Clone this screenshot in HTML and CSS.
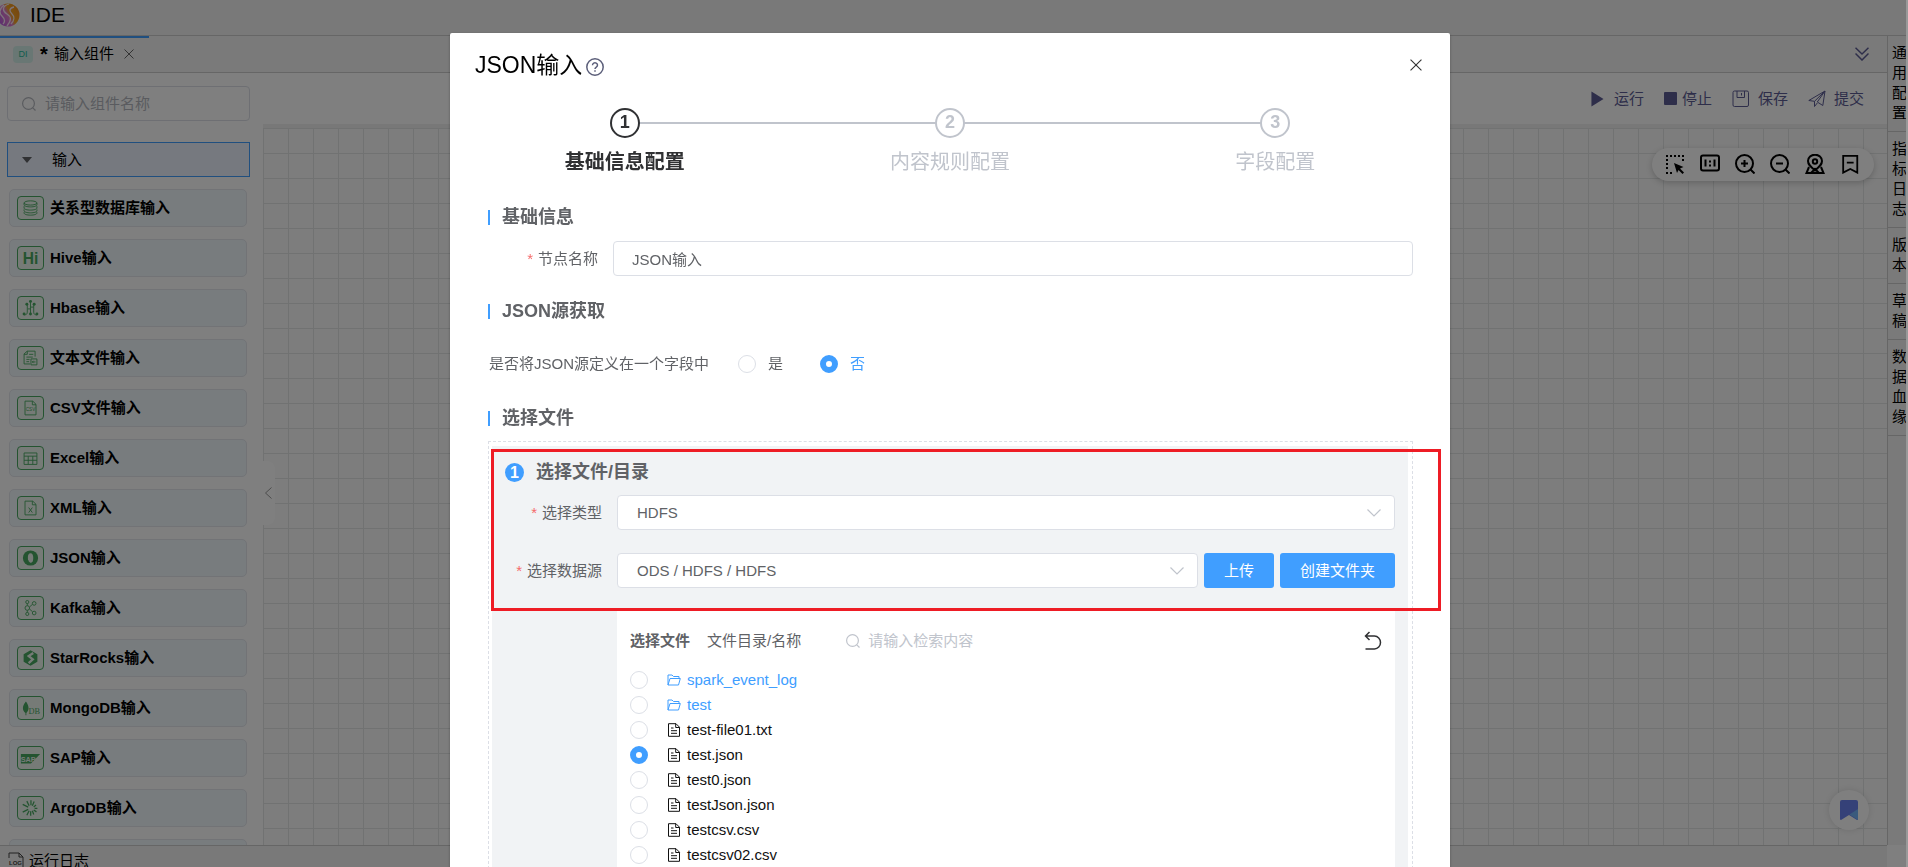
FILE: index.html
```html
<!doctype html>
<html lang="zh-CN">
<head>
    <meta charset="utf-8">
    <meta name="viewport" content="width=device-width, initial-scale=1">
    <title>IDE</title>
    <link rel="stylesheet" href="styles.css">
</head>
<body>
    <div class="app">
        <header class="header">
            <svg class="logo" viewBox="0 0 24 24">
                <defs>
                    <linearGradient id="logoFill" x1="0" y1="0.7" x2="1" y2="0.2">
                        <stop offset="0" stop-color="#b45be0"/>
                        <stop offset="0.45" stop-color="#e07ad0"/>
                        <stop offset="0.6" stop-color="#f5a623"/>
                        <stop offset="1" stop-color="#f08a1c"/>
                    </linearGradient>
                </defs>
                <circle cx="12" cy="12" r="11.500" fill="url(#logoFill)"/>
                <path d="M13 1c-7 2-7 7-2 10s4 7 0 12M18 4c-5 1-5 4-2 7s2 7-1 10M8 2c-5 4-5 8-2 11s3 6 1 8" fill="none" stroke="#fbe9f4" stroke-width="1.300"/>
            </svg>
            <span class="brand">IDE</span>
        </header>

        <div class="workspace">
            <div class="main">
                <nav class="tabs">
                    <div class="tab">
                        <span class="tab-badge">DI</span>
                        <b class="tab-dirty">*</b>
                        <span>输入组件</span>
                        <button class="tab-close" aria-label="关闭"><svg viewBox="0 0 10 10"><path d="M0.500 0.500l9 9M9.500 0.500l-9 9"/></svg></button>
                    </div>
                    <button class="tabs-more" aria-label="更多"><svg viewBox="0 0 14 14"><path d="M0.500 0.800l6.500 6.200 6.500-6.200M0.500 6.500l6.500 6.500 6.500-6.500"/></svg></button>
                </nav>

                <div class="editor">
                    <aside class="sidebar">
                        <label class="search">
                            <svg viewBox="0 0 14 14"><circle cx="6.500" cy="6.500" r="5.900"/><path d="M10.800 10.800l2.700 2.700"/></svg>
                            <input type="text" placeholder="请输入组件名称">
                        </label>
                        <button class="group"><span class="caret"></span>输入</button>
                        <ul class="components">
                            <li><svg viewBox="0 0 27 24"><ellipse cx="13.500" cy="6.500" rx="7" ry="2.300"/><path d="M6.500 6.500v2c0 1.300 3 2.300 7 2.300s7-1 7-2.300v-2M6.500 10v2c0 1.300 3 2.300 7 2.300s7-1 7-2.300v-2M6.500 13.500v1.500c0 1.300 3 2.300 7 2.300s7-1 7-2.300v-1.500M6.500 16.500v1c0 1.300 3 2.300 7 2.300s7-1 7-2.300v-1"/></svg>关系型数据库输入</li>
                            <li><svg viewBox="0 0 27 24"><text class="hi" x="13.500" y="18.500" font-size="17" text-anchor="middle">Hi</text></svg>Hive输入</li>
                            <li><svg viewBox="0 0 27 24"><path d="M13.500 19v-13M10 7.500v9c0 2-1 3-3.500 3M17 7.500v9c0 2 1 3 3.500 3M13.500 13h-3M13.500 11h3.500"/><g class="solid"><circle cx="13.500" cy="5" r="1.600"/><circle cx="9.500" cy="8" r="1.600"/><circle cx="17.500" cy="8" r="1.600"/><circle cx="6.500" cy="18.500" r="1.600"/><circle cx="13.500" cy="18.500" r="1.600"/><circle cx="20.500" cy="18.500" r="1.600"/></g></svg>Hbase输入</li>
                            <li><svg viewBox="0 0 27 24"><path d="M13 18.500h-6.500v-11l3.500-3h8.500v6M10 4.500v3.500h-3.500M12 8h4.500M9 11h7M9 13.500h3.500M9 16h3M14 13h6.500v6.500h-6.500zM19 16.300h-3.500l1.300-1.300M15.500 16.300l1.300 1.300"/></svg>文本文件输入</li>
                            <li><svg viewBox="0 0 27 24"><path d="M7.500 4.500h8.500l3.500 3.500v11.500h-12zM15.500 4.500v4h4"/><text x="13.500" y="15.500" font-size="5" text-anchor="middle">CSV</text></svg>CSV文件输入</li>
                            <li><svg viewBox="0 0 27 24"><path d="M6.500 6.500h14v12.500h-14zM6.500 10h14M6.500 14.500h14M11 10v9M16 10v9"/></svg>Excel输入</li>
                            <li><svg viewBox="0 0 27 24"><path d="M7.500 4.500h8.500l3.500 3.500v11.500h-12zM15.500 4.500v4h4M11.500 11.500l4 5.500M15.500 11.500l-4 5.500"/></svg>XML输入</li>
                            <li><svg viewBox="0 0 27 24"><circle class="solid" cx="13.500" cy="12" r="8.300"/><ellipse class="hole" cx="13.500" cy="12" rx="3" ry="5.300"/><path d="M12 5.500c-3.500 4-3 9 2 13"/></svg>JSON输入</li>
                            <li><svg viewBox="0 0 27 24"><circle cx="10" cy="12" r="2.500"/><circle cx="10" cy="5.500" r="1.700"/><circle cx="10" cy="18.500" r="1.700"/><circle cx="17.500" cy="7" r="2"/><circle cx="17.500" cy="17.500" r="2"/><path d="M10 7.200v2.300M10 14.500v2.300M12.300 11l3.300-3M12.300 13l3.300 3"/></svg>Kafka输入</li>
                            <li><svg viewBox="0 0 27 24"><path class="solid" d="M13.500 3.500l7.500 4.300v8.400l-7.500 4.300-7.500-4.300v-8.400z"/><path class="slash" d="M16.500 6.500l-5 3.500 4.500 3.500-4.500 4"/></svg>StarRocks输入</li>
                            <li><svg viewBox="0 0 27 24"><path class="solid" d="M8.500 5c-4.500 5-4 10-0.500 12.500v2.500h1v-2.500c3.500-3 3-8-0.500-12.500z"/><text class="serif" x="17.500" y="19" font-size="9" text-anchor="middle">DB</text></svg>MongoDB输入</li>
                            <li><svg viewBox="0 0 27 24"><path class="solid" d="M3 7.500h21l-10 10.500h-11z"/><text class="light" x="11" y="16" font-size="8" text-anchor="middle">SAP</text></svg>SAP输入</li>
                            <li><svg viewBox="0 0 27 24"><path class="rays" d="M11 11l-6-3M12 9.500l-2.500-5M14 9v-5.500M15.500 9.500l2-4.500M17 10.800l2.500-2M18 12.500h3M17 14.200l3 2M15.500 15l1.500 4M13.700 15.500v5M12 15l-2.500 5M11 13.500l-6 3"/></svg>ArgoDB输入</li>
                            <li></li>
                        </ul>
                    </aside>

                    <section class="stage">
                        <div class="toolbar">
                            <button><svg class="fill run" viewBox="0 0 14 16"><path d="M0.500 0l13 8-13 8z"/></svg>运行</button>
                            <button class="stop"><svg class="fill" viewBox="0 0 13 13"><rect width="13" height="13" rx="1"/></svg>停止</button>
                            <button><svg class="wide" viewBox="0 0 18 18"><rect x="1" y="1" width="15.500" height="15.500" rx="1.500"/><path d="M5 1v6.500h7.500v-6.500M9.500 3v2.500"/></svg>保存</button>
                            <button><svg class="wide" viewBox="0 0 18 18"><path d="M0.800 10.500l16.200-9.500-2.200 14.500-5.500-3.500 7.700-11-10.500 10.300zM6.500 11.300v5.200l2.800-3.500"/></svg>提交</button>
                        </div>
                        <div class="canvas">
                            <button class="collapse" aria-label="收起"><svg viewBox="0 0 7 12"><path d="M6.500 0.500l-6 5.500 6 5.500"/></svg></button>
                            <div class="zoombar">
                                <svg viewBox="0 0 20 20"><path d="M1 2h18M1 6h2M1 10h2M1 14h2M17 6h2M1 19h8" stroke-dasharray="2 2"/><path class="ink" d="M9 9l9.500 4-3.500 1.500 4 4-1.500 1.500-4-4-1.500 3z"/></svg>
                                <svg viewBox="0 0 20 20"><rect x="1" y="1.500" width="18" height="15" rx="2"/><path d="M5.500 5.500v7M14.500 5.500v7M10 6.500v2M10 10.500v2"/></svg>
                                <svg viewBox="0 0 20 20"><circle cx="9.500" cy="9.500" r="8.500"/><path d="M15.500 15.500l4 4M9.500 6v7M6 9.500h7"/></svg>
                                <svg viewBox="0 0 20 20"><circle cx="9.500" cy="9.500" r="8.500"/><path d="M15.500 15.500l4 4M6 9.500h7"/></svg>
                                <svg viewBox="0 0 20 20"><path d="M10 16.500c-4.500-4-7-6-7-9.500a7 6.300 0 0 1 14 0c0 3.500-2.500 5.500-7 9.500zM4 13l-2.500 6h17l-2.500-6M6 19l4-4 4 4"/><circle cx="10" cy="7.500" r="2.200"/></svg>
                                <svg viewBox="0 0 20 22"><path d="M2.500 2h15.500v18.500l-7.700-4-7.800 4zM6.500 9.500h7.500"/></svg>
                            </div>
                            <button class="bookmark" aria-label="书签"><svg viewBox="0 0 18 20"><path d="M2 0h14a2 2 0 0 1 2 2v17.500l-1 0.500-8-5-8 5-1-0.500v-17.500a2 2 0 0 1 2-2z" fill="#6a83f0"/><path d="M18 9v11l-8.500-5.500z" fill="#74b4fa"/></svg></button>
                        </div>
                    </section>
                </div>
            </div>

            <aside class="rail">
                <a href="#">通用配置</a>
                <a href="#">指标日志</a>
                <a href="#">版本</a>
                <a href="#">草稿</a>
                <a href="#">数据血缘</a>
            </aside>
        </div>

        <footer class="footer">
            <svg viewBox="0 0 16 18"><path d="M1 6v-5h10l4 4v12h-14v-2M11 1v4h4"/><text x="7.500" y="13" font-size="6" text-anchor="middle">LOG</text></svg>
            <span>运行日志</span>
        </footer>
    </div>

    <div class="overlay">
        <div class="dialog" role="dialog" aria-labelledby="dialogTitle">
            <div class="dialog-head">
                <h1 id="dialogTitle">JSON输入</h1>
                <svg class="help" viewBox="0 0 18 18"><circle cx="9" cy="9" r="8.200"/><path d="M6.500 7.200a2.500 2.400 0 1 1 3.800 2c-0.900 0.600-1.300 0.900-1.300 1.900M9 12.300v1.500"/></svg>
                <button class="dialog-close" aria-label="关闭"><svg viewBox="0 0 11 11"><path d="M0.500 0.500l10 10M10.500 0.500l-10 10"/></svg></button>
            </div>

            <ol class="steps">
                <li class="active"><span class="step-num">1</span>基础信息配置</li>
                <li><span class="step-num">2</span>内容规则配置</li>
                <li><span class="step-num">3</span>字段配置</li>
            </ol>

            <form class="form">
                <h2>基础信息</h2>
                <div class="field">
                    <label class="required" for="nodeName">节点名称</label>
                    <input id="nodeName" type="text" value="JSON输入">
                </div>

                <h2>JSON源获取</h2>
                <div class="radios">
                    <span class="radios-title">是否将JSON源定义在一个字段中</span>
                    <label><input type="radio" name="inField">是</label>
                    <label><input type="radio" name="inField" checked>否</label>
                </div>

                <h2>选择文件</h2>
                <div class="file-box">
                    <div class="file-inner">
                        <h3><span class="dot">1</span>选择文件/目录</h3>
                        <div class="field">
                            <label class="required" for="fileType">选择类型</label>
                            <span class="select"><select id="fileType"><option>HDFS</option></select><svg viewBox="0 0 14 8"><path d="M0.500 0.500l6.500 6.500 6.500-6.500"/></svg></span>
                        </div>
                        <div class="field">
                            <label class="required" for="dataSource">选择数据源</label>
                            <span class="select"><select id="dataSource"><option>ODS / HDFS / HDFS</option></select><svg viewBox="0 0 14 8"><path d="M0.500 0.500l6.500 6.500 6.500-6.500"/></svg></span>
                            <button type="button" class="primary">上传</button>
                            <button type="button" class="primary">创建文件夹</button>
                        </div>
                        <div class="files">
                            <div class="files-head">
                                <b>选择文件</b>
                                <span class="files-path">文件目录/名称</span>
                                <label class="files-search">
                                    <svg viewBox="0 0 14 14"><circle cx="6.500" cy="6.500" r="5.900"/><path d="M10.800 10.800l2.700 2.700"/></svg>
                                    <input type="text" placeholder="请输入检索内容">
                                </label>
                                <button type="button" class="back" aria-label="返回"><svg viewBox="0 0 18 20"><path d="M5.500 1l-4 4 4 4M2 5h8.500a6 6.500 0 0 1 0 13h-9"/></svg></button>
                            </div>
                            <label class="file folder"><input type="radio" name="file"><svg viewBox="0 0 14 12"><path d="M1 11v-10h4l1.500 1.500h5.500v2M1 11l2-6.500h10.300l-1.800 6.500z"/></svg>spark_event_log</label>
                            <label class="file folder"><input type="radio" name="file"><svg viewBox="0 0 14 12"><path d="M1 11v-10h4l1.500 1.500h5.500v2M1 11l2-6.500h10.300l-1.800 6.500z"/></svg>test</label>
                            <label class="file"><input type="radio" name="file"><svg viewBox="0 0 14 14"><path d="M1.500 0.700h7.500l3.500 3.500v9.100h-11zM8.700 0.700v3.800h3.800M4 5h2.500M4 7.700h6M4 10.300h6"/></svg>test-file01.txt</label>
                            <label class="file"><input type="radio" name="file" checked><svg viewBox="0 0 14 14"><path d="M1.500 0.700h7.500l3.500 3.500v9.100h-11zM8.700 0.700v3.800h3.800M4 5h2.500M4 7.700h6M4 10.300h6"/></svg>test.json</label>
                            <label class="file"><input type="radio" name="file"><svg viewBox="0 0 14 14"><path d="M1.500 0.700h7.500l3.500 3.500v9.100h-11zM8.700 0.700v3.800h3.800M4 5h2.500M4 7.700h6M4 10.300h6"/></svg>test0.json</label>
                            <label class="file"><input type="radio" name="file"><svg viewBox="0 0 14 14"><path d="M1.500 0.700h7.500l3.500 3.500v9.100h-11zM8.700 0.700v3.800h3.800M4 5h2.500M4 7.700h6M4 10.300h6"/></svg>testJson.json</label>
                            <label class="file"><input type="radio" name="file"><svg viewBox="0 0 14 14"><path d="M1.500 0.700h7.500l3.500 3.500v9.100h-11zM8.700 0.700v3.800h3.800M4 5h2.500M4 7.700h6M4 10.300h6"/></svg>testcsv.csv</label>
                            <label class="file"><input type="radio" name="file"><svg viewBox="0 0 14 14"><path d="M1.500 0.700h7.500l3.500 3.500v9.100h-11zM8.700 0.700v3.800h3.800M4 5h2.500M4 7.700h6M4 10.300h6"/></svg>testcsv02.csv</label>
                        </div>
                    </div>
                    <div class="marker"></div>
                </div>
            </form>
        </div>
    </div>
</body>
</html>
```
FILE: styles.css
```css
* {
    box-sizing: border-box;
}

body {
    margin: 0;
    height: 100vh;
    overflow: hidden;
    background: #999;
    font-family: "Liberation Sans", "Noto Sans CJK SC", sans-serif;
    font-size: 15px;
    line-height: 20px;
    color: #000;
}

button, input, select {
    font: inherit;
    color: inherit;
}

button {
    border: 0;
    padding: 0;
    background: none;
    cursor: pointer;
}

svg {
    display: block;
    flex: none;
    fill: none;
    stroke: currentColor;
}

svg text {
    fill: currentColor;
    stroke: none;
}

ul, ol, h1, h2, h3 {
    margin: 0;
    padding: 0;
    list-style: none;
}

.app {
    display: flex;
    flex-direction: column;
    height: 100vh;
    margin-right: 2px;
    background: #fff;
}

.header {
    display: flex;
    align-items: center;
    gap: 10px;
    height: 36px;
    padding-bottom: 5px;
    border-bottom: 1px solid #ccc;
    background: #f3f3f3;
}

.logo {
    width: 24px;
    height: 24px;
    margin-left: -4px;
    stroke: none;
}

.brand {
    font-size: 21px;
}

.workspace {
    display: flex;
    flex: 1;
    min-height: 0;
}

.main {
    display: flex;
    flex-direction: column;
    flex: 1;
    min-width: 0;
}

.tabs {
    display: flex;
    justify-content: space-between;
    height: 37px;
    border-bottom: 1px solid #ccc;
    background: #f5f5f5;
}

.tab {
    display: flex;
    align-items: center;
    width: 149px;
    padding: 0 0 2px 13px;
    border-top: 2px solid #409eff;
}

.tab-badge {
    width: 20px;
    border-radius: 4px;
    background: #d3eee8;
    color: #27ba9b;
    font-size: 9px;
    line-height: 17px;
    text-align: center;
}

.tab-dirty {
    width: 21px;
    padding-left: 7px;
    font-size: 20px;
}

.tab-close svg {
    width: 10px;
    height: 10px;
    margin-left: 10px;
    color: #666;
}

.tabs-more {
    margin-right: 18px;
    color: #5c5c94;
}

.tabs-more svg {
    width: 14px;
    height: 14px;
    stroke-width: 1.5;
}

.editor {
    display: flex;
    flex: 1;
    min-height: 0;
}

.sidebar {
    width: 263px;
    padding: 13px 13px 0 7px;
    overflow: hidden;
}

.search {
    display: flex;
    align-items: center;
    gap: 9px;
    height: 35px;
    padding-left: 14px;
    border: 1px solid #dcdfe6;
    border-radius: 4px;
    color: #b4b7be;
}

.search svg, .files-search svg {
    width: 14px;
    height: 14px;
    stroke-width: 1.2;
}

.search input, .files-search input {
    flex: 1;
    min-width: 0;
    padding: 0;
    border: 0;
    outline: none;
    background: none;
}

::placeholder {
    color: #c0c4cc;
    opacity: 1;
}

.search ::placeholder {
    color: #b4b7be;
}

.group {
    display: flex;
    align-items: center;
    width: 243px;
    height: 35px;
    margin-top: 21px;
    padding-left: 14px;
    border: 1px solid #409eff;
    background: #ecf2ff;
}

.caret {
    margin-right: 20px;
    border: 5px solid transparent;
    border-top: 6px solid #606266;
    border-bottom: 0;
}

.components {
    display: flex;
    flex-direction: column;
    gap: 12px;
    padding: 12px 3px 0 2px;
}

.components li {
    display: flex;
    flex: none;
    align-items: center;
    gap: 6px;
    height: 38px;
    padding-left: 7px;
    border: 1px solid #e4e7ed;
    border-radius: 5px;
    background: #f0f8fd;
    font-weight: bold;
}

.components svg {
    width: 27px;
    height: 24px;
    border: 1px solid #48a860;
    border-radius: 4px;
    background: #edf7ef;
    color: #48a860;
    font-weight: normal;
}

.components .solid {
    fill: currentColor;
    stroke: none;
}

.components .hole {
    fill: #edf7ef;
    stroke: none;
}

.components .slash {
    stroke: #edf7ef;
    stroke-width: 2.5;
}

.components .rays {
    stroke-width: 1.4;
}

.components .hi {
    font-weight: bold;
}

.components .serif {
    font-family: "Liberation Serif", serif;
}

.components .light {
    fill: #edf7ef;
    font-weight: bold;
}

.stage {
    display: flex;
    flex-direction: column;
    flex: 1;
    min-width: 0;
}

.toolbar {
    display: flex;
    justify-content: flex-end;
    align-items: center;
    gap: 20px;
    height: 51px;
    padding-right: 23px;
    color: #5c5c94;
}

.toolbar button {
    display: flex;
    align-items: center;
    gap: 8px;
}

.toolbar .stop {
    gap: 5px;
}

.toolbar svg {
    width: 13px;
    height: 13px;
}

.toolbar .fill {
    fill: currentColor;
    stroke: none;
}

.toolbar .run {
    height: 16px;
    margin-right: 2px;
}

.toolbar .wide {
    width: 18px;
    height: 18px;
}

.canvas {
    position: relative;
    flex: 1;
    border-top: 4px solid #f0f0f0;
    background-color: #fafafa;
    background-image:
        linear-gradient(#e2e5e5 1px, transparent 1px),
        linear-gradient(90deg, #e2e5e5 1px, transparent 1px);
    background-size: 25px 25px;
}

.collapse {
    position: absolute;
    top: 333px;
    left: 0;
    width: 12px;
    height: 64px;
    border-radius: 0 8px 8px 0;
    background: #fff;
    color: #999;
}

.collapse svg {
    width: 7px;
    height: 12px;
    margin-left: 2px;
}

.zoombar {
    position: absolute;
    top: 20px;
    right: 13px;
    display: flex;
    align-items: center;
    gap: 15px;
    height: 33px;
    padding: 0 14px 2px 13px;
    border-radius: 17px;
    background: #fff;
    box-shadow: 0 2px 6px rgba(0, 0, 0, 0.2);
}

.zoombar svg {
    width: 20px;
    height: 20px;
    stroke-width: 2;
}

.zoombar .ink {
    fill: currentColor;
    stroke: none;
}

.bookmark {
    position: absolute;
    right: 18px;
    bottom: 15px;
    display: flex;
    align-items: center;
    justify-content: center;
    width: 40px;
    height: 40px;
    border-radius: 50%;
    background: #fff;
    box-shadow: 0 0 6px rgba(0, 0, 0, 0.12);
}

.bookmark svg {
    width: 18px;
    height: 20px;
    stroke: none;
}

.rail {
    width: 19px;
    border-left: 1px solid #ccc;
    background: #f5f5f5;
    overflow: hidden;
}

.rail a {
    display: block;
    padding: 7px 0 8px 4px;
    border-bottom: 1px solid #ccc;
    color: #000;
    text-decoration: none;
    word-break: break-all;
}

.footer {
    display: flex;
    align-items: center;
    gap: 5px;
    height: 22px;
    margin-right: 19px;
    padding: 8px 0 0 8px;
    border-top: 1px solid #ccc;
    background: #f3f3f3;
}

.footer svg {
    width: 16px;
    height: 18px;
    color: #444;
}

.footer text {
    font-weight: bold;
}

.overlay {
    position: fixed;
    inset: 0 2px 0 0;
    padding: 33px 6px 0 0;
    background: rgba(0, 0, 0, 0.5);
    overflow: hidden;
}

.dialog {
    width: 1000px;
    max-width: 100%;
    min-height: 100vh;
    margin: 0 auto;
    border-radius: 2px;
    background: #fff;
    box-shadow: 0 1px 3px rgba(0, 0, 0, 0.3);
    color: #606266;
}

.dialog-head {
    display: flex;
    align-items: center;
    gap: 4px;
    height: 64px;
    padding: 0 28px 0 25px;
    color: #000;
}

.dialog-head h1 {
    font-size: 23px;
    font-weight: normal;
}

.help {
    width: 18px;
    height: 18px;
    margin-top: 3px;
    color: #5c5f7a;
    stroke-width: 1.5;
}

.dialog-close {
    margin-left: auto;
    color: #333;
}

.dialog-close svg {
    width: 12px;
    height: 12px;
}

.steps {
    display: flex;
    padding: 11px 12px 0;
}

.steps li {
    position: relative;
    display: flex;
    flex: 1;
    flex-direction: column;
    align-items: center;
    gap: 14px;
    color: #c0c4cc;
    font-size: 20px;
    line-height: 20px;
}

.steps li + li::before {
    content: "";
    position: absolute;
    top: 14px;
    left: -50%;
    width: 100%;
    height: 2px;
    background: #c0c4cc;
}

.step-num {
    position: relative;
    z-index: 1;
    width: 30px;
    height: 30px;
    border: 2px solid #c0c4cc;
    border-radius: 50%;
    background: #fff;
    font-size: 18px;
    font-weight: bold;
    line-height: 25px;
    text-align: center;
}

.steps .active {
    color: #303133;
    font-weight: bold;
}

.active .step-num {
    border-color: #303133;
}

.form {
    padding: 35px 37px 0 38px;
}

.form h2 {
    display: flex;
    align-items: center;
    gap: 12px;
    height: 20px;
    font-size: 18px;
}

.form h2::before {
    content: "";
    width: 2px;
    height: 15px;
    background: #409eff;
}

.field {
    display: flex;
    align-items: center;
    gap: 6px;
}

.field label {
    width: 119px;
    padding-right: 9px;
    text-align: right;
}

.required::before {
    content: "*";
    margin-right: 5px;
    color: #f56c6c;
}

.field input, .select {
    flex: 1;
    min-width: 0;
    height: 35px;
    border: 1px solid #dcdfe6;
    border-radius: 4px;
    background: #fff;
}

.field input {
    padding: 0 18px;
}

.form > .field {
    margin: 14px 0 25px;
}

.radios {
    display: flex;
    align-items: center;
    margin: 33px 0 34px;
    padding-left: 1px;
}

.radios-title {
    margin-right: 29px;
}

.radios label {
    display: flex;
    align-items: center;
    gap: 12px;
    margin-right: 37px;
}

.radios label:has(:checked) {
    color: #409eff;
}

input[type="radio"] {
    appearance: none;
    flex: none;
    width: 18px;
    height: 18px;
    margin: 0;
    border: 1px solid #dcdfe6;
    border-radius: 50%;
    background: #fff;
}

input[type="radio"]:checked {
    border: 6px solid #409eff;
}

.file-box {
    position: relative;
    margin-top: 13px;
    padding: 4px 4px 0 3px;
    border: 1px dashed #dcdfe6;
}

.file-inner {
    padding: 16px 13px 0;
    background: #f1f3f5;
}

.file-inner h3 {
    display: flex;
    align-items: center;
    gap: 12px;
    height: 20px;
    margin-bottom: 13px;
    font-size: 18px;
}

.dot {
    width: 19px;
    height: 19px;
    border-radius: 50%;
    background: #409eff;
    color: #fff;
    font-size: 16px;
    line-height: 19px;
    text-align: center;
}

.file-inner .field {
    margin-bottom: 22px;
}

.file-inner .field + .field {
    margin: 23px 0 20px;
}

.file-inner .field label {
    width: 106px;
}

.select {
    position: relative;
}

.select select {
    width: 100%;
    height: 100%;
    padding: 0 19px;
    border: 0;
    outline: none;
    background: none;
    appearance: none;
}

.select svg {
    position: absolute;
    top: 13px;
    right: 13px;
    width: 14px;
    height: 8px;
    color: #c0c4cc;
    stroke-width: 1.2;
    pointer-events: none;
}

.primary {
    height: 35px;
    padding: 0 20px;
    border-radius: 3px;
    background: #409eff;
    color: #fff;
}

.files {
    min-height: 300px;
    margin-left: 112px;
    padding: 20px 13px 0;
    background: #fff;
}

.files-head {
    display: flex;
    align-items: center;
    height: 26px;
    margin-bottom: 13px;
}

.files-path {
    margin: 0 45px 0 17px;
}

.files-search {
    display: flex;
    flex: 1;
    align-items: center;
    gap: 8px;
    color: #c0c4cc;
}

.back {
    color: #303133;
}

.back svg {
    width: 18px;
    height: 20px;
    stroke-width: 1.5;
}

.file {
    display: flex;
    align-items: center;
    height: 25px;
    color: #111;
}

.file svg {
    width: 14px;
    height: 14px;
    margin: 0 6px 0 19px;
}

.folder {
    color: #409eff;
}

.folder svg {
    height: 12px;
}

/* red frame over the source picker */
.marker {
    position: absolute;
    top: 7px;
    right: -29px;
    left: 2px;
    height: 162px;
    border: 3px solid #ee1c25;
    pointer-events: none;
}
```
